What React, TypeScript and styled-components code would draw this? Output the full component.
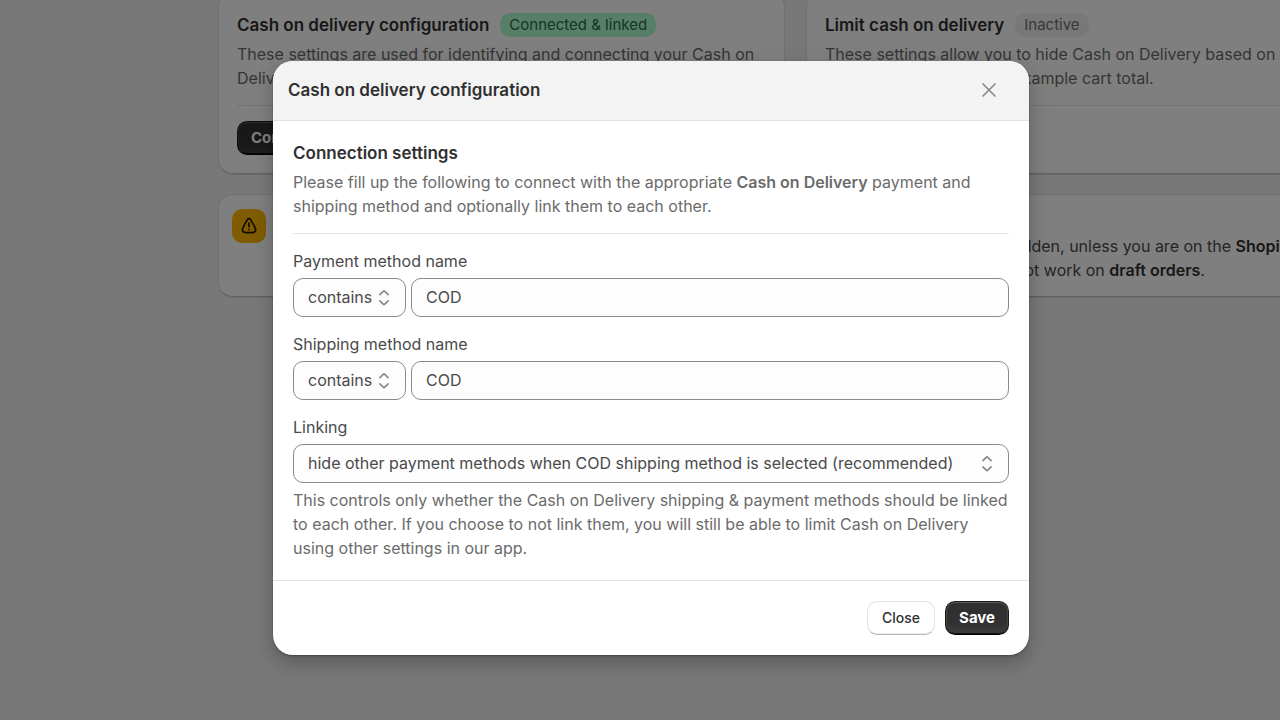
import React from "react";
import styled, { createGlobalStyle } from "styled-components";

const GlobalStyle = createGlobalStyle`
  *, *::before, *::after { box-sizing: border-box; }
  body {
    margin: 0;
    background: #f1f1f1;
    color: #303030;
    font: 400 16px/24px Inter, "Liberation Sans", sans-serif;
  }
  h2, h3, p { margin: 0; }
  button, input, select { font-family: inherit; }
  strong { font-weight: 600; }
`;

const Shell = styled.div`
  position: relative;
  min-height: 100vh;
  overflow: hidden;
`;

const Page = styled.main`
  display: grid;
  grid-template-columns: 567px 567px;
  gap: 20px 21px;
  padding-left: 218px;
`;

const Card = styled.section`
  background: #fff;
  border-radius: 15px;
  border: 1px solid #e3e3e3;
  border-bottom-color: #c4c4c4;
  box-shadow: 0 1px 1px rgba(26, 26, 26, 0.12);
`;

const SettingsCard = styled(Card)`
  display: flex;
  flex-direction: column;
  align-items: flex-start;
  margin-top: -8px;
  padding: 20px 18px 18px;
`;

const CardHeader = styled.div`
  display: flex;
  align-items: center;
  gap: 11px;
  margin-bottom: 5px;
`;

const Heading = styled.h2`
  font-size: 17px;
  line-height: 24px;
  font-weight: 600;
`;

const Badge = styled.span<{ $tone?: "success" }>`
  padding: 0 9px;
  border-radius: 10px;
  font-size: 15px;
  line-height: 24px;
  background: ${(p) => (p.$tone ? "#affed0" : "#f0f0f0")};
  color: ${(p) => (p.$tone ? "#2b6a4c" : "#707070")};
`;

const Subdued = styled.p`
  color: #6b6b6b;
`;

const Divider = styled.hr`
  width: 100%;
  height: 1px;
  margin: 15px 0;
  border: 0;
  background: #e6e6e6;
`;

const Banner = styled(Card)`
  grid-column: 1 / -1;
  display: flex;
  gap: 15px;
  padding: 14px 13px;
`;

const WarningTile = styled.span`
  display: grid;
  flex: none;
  place-items: center;
  width: 34px;
  height: 34px;
  border-radius: 10px;
  background: #ffb800;
`;

const BannerText = styled.div`
  padding-top: 1px;
  white-space: nowrap;
  color: #4a4a4a;

  strong { color: #303030; }
`;

const Button = styled.button<{ $primary?: boolean }>`
  height: 34px;
  padding: 0 ${(p) => (p.$primary ? "13px" : "14px")};
  border-radius: 10px;
  font-size: ${(p) => (p.$primary ? "15px" : "14px")};
  line-height: 20px;
  font-weight: ${(p) => (p.$primary ? 700 : 500)};
  color: ${(p) => (p.$primary ? "#fff" : "#303030")};
  background: ${(p) => (p.$primary ? "linear-gradient(#303030 60%, #3c3c3c)" : "#fff")};
  border: 1px solid ${(p) => (p.$primary ? "#1a1a1a" : "#e3e3e3")};
  border-bottom-color: ${(p) => (p.$primary ? "#000" : "#b5b5b5")};
  box-shadow: ${(p) =>
    p.$primary
      ? "inset 0 1px 0 #5c5c5c, inset 1px 0 0 #454545, inset -1px 0 0 #454545, inset 0 -1px 0 #111"
      : "inset 0 -1px 0 #ececec"};
`;

const Overlay = styled.div`
  position: absolute;
  inset: 0;
  display: flex;
  align-items: center;
  justify-content: center;
  padding: 0 0 5px 22px;
  background: rgba(0, 0, 0, 0.5);
`;

const Dialog = styled.section`
  width: 100%;
  max-width: 756px;
  overflow: hidden;
  border-radius: 20px;
  background: #fff;
  box-shadow: 0 8px 20px rgba(0, 0, 0, 0.25), 0 1px 2px rgba(0, 0, 0, 0.3);
`;

const DialogHeader = styled.header`
  display: flex;
  align-items: center;
  justify-content: space-between;
  height: 60px;
  padding: 0 23px 0 15px;
  border-bottom: 1px solid #e3e3e3;
  background: #f3f3f3;
`;

const IconButton = styled.button`
  display: grid;
  place-items: center;
  width: 34px;
  height: 34px;
  padding: 0;
  border: 0;
  border-radius: 10px;
  background: transparent;
`;

const DialogBody = styled.form`
  padding: 20px;
`;

const SectionTitle = styled.h3`
  margin-bottom: 5px;
  font-size: 17px;
  line-height: 24px;
  font-weight: 600;
`;

const Fields = styled.div`
  display: flex;
  flex-direction: column;
  gap: 15px;
`;

const Field = styled.div`
  display: flex;
  flex-direction: column;
  gap: 5px;
`;

const Label = styled.label`
  align-self: flex-start;
  color: #4a4a4a;
`;

const Row = styled.div`
  display: flex;
  gap: 5px;
`;

const TextInput = styled.input`
  flex: 1;
  min-width: 0;
  height: 39px;
  padding: 0 14px;
  border: 1px solid #8a8a8a;
  border-radius: 10px;
  background: #fdfdfd;
  color: #4a4a4a;
  font-size: 16px;
  line-height: 24px;
`;

const SelectBox = styled.div<{ $compact?: boolean }>`
  position: relative;
  flex: none;
  width: ${(p) => (p.$compact ? "113px" : "100%")};
`;

const Select = styled.select`
  display: block;
  width: 100%;
  height: 39px;
  padding: 0 28px 0 14px;
  appearance: none;
  border: 1px solid #8a8a8a;
  border-radius: 10px;
  background: #fdfdfd;
  color: #4a4a4a;
  font-size: 16px;
  line-height: 24px;
`;

const SelectArrows = styled.svg`
  position: absolute;
  top: 8px;
  right: 10px;
  pointer-events: none;
`;

const DialogFooter = styled.footer`
  display: flex;
  justify-content: flex-end;
  gap: 10px;
  padding: 20px;
  border-top: 1px solid #e3e3e3;
`;

type PickerProps = { id: string; compact?: boolean; label?: string; option: string };

const Picker = ({ id, compact, label, option }: PickerProps) => (
  <SelectBox $compact={compact}>
    <Select id={id} aria-label={label}>
      <option>{option}</option>
    </Select>
    <SelectArrows width="24" height="24" viewBox="0 0 24 24" fill="none" stroke="#8a8a8a" strokeWidth="1.7" strokeLinecap="round" strokeLinejoin="round" aria-hidden="true">
      <path d="M7.900 8.600 11.200 5.300a1.100 1.100 0 0 1 1.600 0L16.100 8.600M7.900 14.900l3.300 3.300a1.100 1.100 0 0 0 1.600 0l3.300-3.300" />
    </SelectArrows>
  </SelectBox>
);

const MethodField = ({ id, label }: { id: string; label: string }) => (
  <Field>
    <Label htmlFor={id}>{label}</Label>
    <Row>
      <Picker id={`${id}-match`} compact label={`${label} match`} option="contains" />
      <TextInput id={id} type="text" defaultValue="COD" />
    </Row>
  </Field>
);

export default function App() {
  return (
    <Shell>
      <GlobalStyle />
      <Page>
        <SettingsCard>
          <CardHeader>
            <Heading>Cash on delivery configuration</Heading>
            <Badge $tone="success">Connected &amp; linked</Badge>
          </CardHeader>
          <Subdued>
            These settings are used for identifying and connecting your Cash on Delivery methods.
          </Subdued>
          <Divider />
          <Button $primary type="button">Configure</Button>
        </SettingsCard>
        <SettingsCard>
          <CardHeader>
            <Heading>Limit cash on delivery</Heading>
            <Badge>Inactive</Badge>
          </CardHeader>
          <Subdued>
            These settings allow you to hide Cash on Delivery based on different customer conditions, for example cart total.
          </Subdued>
          <Divider />
        </SettingsCard>
        <Banner>
          <WarningTile>
            <svg width="24" height="24" viewBox="0 0 24 24" fill="none" stroke="#1f1a00" strokeWidth="1.7" strokeLinecap="round" strokeLinejoin="round" aria-hidden="true">
              <path d="M10.400 5.600c.7-1.300 2.500-1.300 3.200 0 1.900 2.900 3.500 5.900 4.800 9.100.7 1.600-.3 3.500-2 3.700-2.900.4-5.900.4-8.800 0-1.700-.2-2.700-2.100-2-3.700 1.300-3.200 2.900-6.200 4.800-9.100zM12 9v3.800M12 15.500v.1" />
            </svg>
          </WarningTile>
          <BannerText>
            <p><strong>Limitations</strong></p>
            <p>
              Due to some limitations of the Shopify platform, express checkout payment methods can not be hidden, unless you are on the <strong>Shopify Plus</strong> plan.
            </p>
            <p>
              Please also note that the payment and shipping method customizations for this app will currently not work on <strong>draft orders</strong>.
            </p>
          </BannerText>
        </Banner>
      </Page>
      <Overlay>
        <Dialog role="dialog" aria-modal="true" aria-labelledby="dialog-title">
          <DialogHeader>
            <Heading id="dialog-title">Cash on delivery configuration</Heading>
            <IconButton type="button" aria-label="Dismiss">
              <svg width="24" height="24" viewBox="0 0 24 24" fill="none" stroke="#8a8a8a" strokeWidth="1.7" strokeLinecap="round" aria-hidden="true">
                <path d="M6 6l12 12M18 6 6 18" />
              </svg>
            </IconButton>
          </DialogHeader>
          <DialogBody id="connection-form">
            <SectionTitle>Connection settings</SectionTitle>
            <Subdued>
              Please fill up the following to connect with the appropriate <strong>Cash on Delivery</strong> payment and shipping method and optionally link them to each other.
            </Subdued>
            <Divider />
            <Fields>
              <MethodField id="payment" label="Payment method name" />
              <MethodField id="shipping" label="Shipping method name" />
              <Field>
                <Label htmlFor="linking">Linking</Label>
                <Picker id="linking" option="hide other payment methods when COD shipping method is selected (recommended)" />
                <Subdued>
                  This controls only whether the Cash on Delivery shipping &amp; payment methods should be linked to each other. If you choose to not link them, you will still be able to limit Cash on Delivery using other settings in our app.
                </Subdued>
              </Field>
            </Fields>
          </DialogBody>
          <DialogFooter>
            <Button type="button">Close</Button>
            <Button $primary type="submit" form="connection-form">Save</Button>
          </DialogFooter>
        </Dialog>
      </Overlay>
    </Shell>
  );
}
